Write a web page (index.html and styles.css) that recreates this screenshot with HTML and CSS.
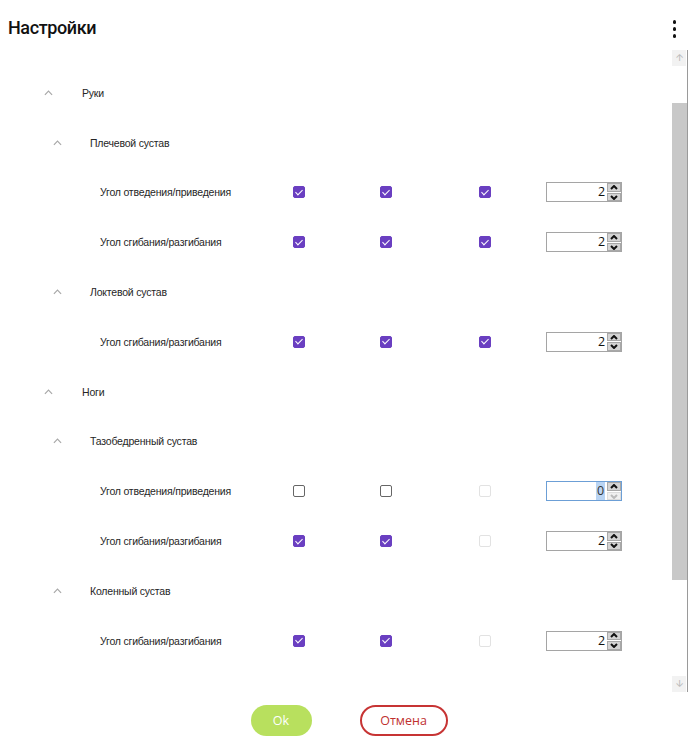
FILE: index.html
```html
<!DOCTYPE html>
<html lang="ru">
<head>
  <meta charset="UTF-8" />
  <meta name="viewport" content="width=device-width, initial-scale=1.0"/>
  <title>Настройки</title>
  <link rel="stylesheet" href="styles.css">
</head>
<body>
  <div class="dialog">
    <div class="header">
      <h1>Настройки</h1>
      <div class="kebab"><span></span><span></span><span></span></div>
    </div>

    <div class="body">
      <div class="tree">
        <div class="group lvl0">
          <svg class="chev" viewBox="0 0 10 6"><polyline points="1,5 5,1 9,5"/></svg>
          <span>Руки</span>
        </div>
        <div class="group lvl1">
          <svg class="chev" viewBox="0 0 10 6"><polyline points="1,5 5,1 9,5"/></svg>
          <span>Плечевой сустав</span>
        </div>
        <div class="leaf">
          <span class="name">Угол отведения/приведения</span>
          <span class="cb on"></span><span class="cb on"></span><span class="cb on"></span>
          <div class="spin"><span class="val">2</span><div class="arrows"><b><svg viewBox="0 0 8 5"><polyline points="1,4 4,1 7,4"/></svg></b><b><svg viewBox="0 0 8 5"><polyline points="1,1 4,4 7,1"/></svg></b></div></div>
        </div>
        <div class="leaf">
          <span class="name">Угол сгибания/разгибания</span>
          <span class="cb on"></span><span class="cb on"></span><span class="cb on"></span>
          <div class="spin"><span class="val">2</span><div class="arrows"><b><svg viewBox="0 0 8 5"><polyline points="1,4 4,1 7,4"/></svg></b><b><svg viewBox="0 0 8 5"><polyline points="1,1 4,4 7,1"/></svg></b></div></div>
        </div>
        <div class="group lvl1">
          <svg class="chev" viewBox="0 0 10 6"><polyline points="1,5 5,1 9,5"/></svg>
          <span>Локтевой сустав</span>
        </div>
        <div class="leaf">
          <span class="name">Угол сгибания/разгибания</span>
          <span class="cb on"></span><span class="cb on"></span><span class="cb on"></span>
          <div class="spin"><span class="val">2</span><div class="arrows"><b><svg viewBox="0 0 8 5"><polyline points="1,4 4,1 7,4"/></svg></b><b><svg viewBox="0 0 8 5"><polyline points="1,1 4,4 7,1"/></svg></b></div></div>
        </div>
        <div class="group lvl0">
          <svg class="chev" viewBox="0 0 10 6"><polyline points="1,5 5,1 9,5"/></svg>
          <span>Ноги</span>
        </div>
        <div class="group lvl1">
          <svg class="chev" viewBox="0 0 10 6"><polyline points="1,5 5,1 9,5"/></svg>
          <span>Тазобедренный сустав</span>
        </div>
        <div class="leaf">
          <span class="name">Угол отведения/приведения</span>
          <span class="cb"></span><span class="cb"></span><span class="cb off"></span>
          <div class="spin focus"><span class="val sel">0</span><div class="arrows"><b><svg viewBox="0 0 8 5"><polyline points="1,4 4,1 7,4"/></svg></b><b class="dis"><svg viewBox="0 0 8 5"><polyline points="1,1 4,4 7,1"/></svg></b></div></div>
        </div>
        <div class="leaf">
          <span class="name">Угол сгибания/разгибания</span>
          <span class="cb on"></span><span class="cb on"></span><span class="cb off"></span>
          <div class="spin"><span class="val">2</span><div class="arrows"><b><svg viewBox="0 0 8 5"><polyline points="1,4 4,1 7,4"/></svg></b><b><svg viewBox="0 0 8 5"><polyline points="1,1 4,4 7,1"/></svg></b></div></div>
        </div>
        <div class="group lvl1">
          <svg class="chev" viewBox="0 0 10 6"><polyline points="1,5 5,1 9,5"/></svg>
          <span>Коленный сустав</span>
        </div>
        <div class="leaf">
          <span class="name">Угол сгибания/разгибания</span>
          <span class="cb on"></span><span class="cb on"></span><span class="cb off"></span>
          <div class="spin"><span class="val">2</span><div class="arrows"><b><svg viewBox="0 0 8 5"><polyline points="1,4 4,1 7,4"/></svg></b><b><svg viewBox="0 0 8 5"><polyline points="1,1 4,4 7,1"/></svg></b></div></div>
        </div>
      </div>

      <div class="scrollbar">
        <div class="sb-btn">&#129129;</div>
        <div class="sb-track"><div class="sb-thumb"></div></div>
        <div class="sb-btn">&#129131;</div>
      </div>
    </div>

    <div class="footer">
      <button class="btn ok">Ok</button>
      <button class="btn cancel">Отмена</button>
    </div>
  </div>
</body>
</html>
```

FILE: styles.css
```css
* {
  box-sizing: border-box;
  margin: 0;
  padding: 0;
}

body {
  font-family: "Liberation Sans", Arial, sans-serif;
  background: #fff;
  color: #262626;
  width: 688px;
  height: 756px;
  overflow: hidden;
}

.dialog {
  display: flex;
  flex-direction: column;
  height: 756px;
}

.header {
  display: flex;
  align-items: center;
  justify-content: space-between;
  height: 50px;
  padding: 4px 12px 0 8px;
}

h1 {
  font-family: Roboto, sans-serif;
  font-size: 18px;
  font-weight: 500;
  color: #111;
  letter-spacing: -0.4px;
}

.kebab {
  display: flex;
  flex-direction: column;
  gap: 3.5px;
  padding-top: 4px;
}

.kebab span {
  width: 3.5px;
  height: 3.5px;
  border-radius: 50%;
  background: #111;
}

.body {
  display: flex;
  height: 642px;
}

.tree {
  flex: 1;
  padding-top: 18px;
}

.group, .leaf {
  height: 49.8px;
  display: flex;
  align-items: center;
  font-size: 10.5px;
  letter-spacing: -0.2px;
}

.chev {
  width: 9px;
  height: 6px;
  fill: none;
  stroke: #a8a8a8;
  stroke-width: 1.3;
}

.lvl0 { padding-left: 44px; }
.lvl0 .chev { margin-right: 29px; }
.lvl1 { padding-left: 53px; }
.lvl1 .chev { margin-right: 28px; }

.leaf {
  display: grid;
  grid-template-columns: 293px 87px 99px 67px 76px;
  align-items: center;
}

.leaf .name {
  padding-left: 100px;
}

.cb {
  width: 12px;
  height: 12px;
  border: 1.5px solid #666;
  border-radius: 2px;
  position: relative;
}

.cb.on {
  background: #6a3fc1;
  border-color: #6a3fc1;
}

.cb.on::after {
  content: "";
  position: absolute;
  left: 2.5px;
  top: 0.5px;
  width: 3px;
  height: 6px;
  border: solid #fff;
  border-width: 0 1.5px 1.5px 0;
  transform: rotate(45deg);
}

.cb.off {
  border-color: #e2e2e2;
}

.spin {
  display: flex;
  width: 76px;
  height: 20px;
  border: 1px solid #a5a5a5;
  background: #fff;
}

.spin.focus {
  border-color: #6c9fd6;
}

.val {
  flex: 1;
  text-align: right;
  font-family: "Open Sans", sans-serif;
  font-size: 12.5px;
  line-height: 18px;
  padding-right: 1px;
  color: #111;
}

.val.sel {
  flex: none;
  margin-left: auto;
  background: #b9d4f3;
  color: #333;
  padding: 0 1px;
  margin-right: 1px;
}

.arrows {
  width: 15px;
  display: flex;
  flex-direction: column;
  gap: 1px;
  padding: 0 0 0 1px;
}

.arrows b {
  flex: 1;
  display: flex;
  align-items: center;
  justify-content: center;
  background: #d4d4d4;
  border: 1px solid #a8a8a8;
}

.arrows svg {
  width: 8px;
  height: 5px;
  fill: none;
  stroke: #111;
  stroke-width: 2;
}

.arrows b.dis {
  background: #f0f0f0;
  border-color: #dcdcdc;
}

.arrows b.dis svg {
  stroke: #bbb;
}

.scrollbar {
  width: 16px;
  display: flex;
  flex-direction: column;
  border-right: 1px solid #9a9a9a;
}

.sb-btn {
  height: 16px;
  margin: 0 1px 0 0;
  background: #f2f2f2;
  color: #bdbdbd;
  font-size: 10px;
  line-height: 16px;
  text-align: center;
}

.sb-track {
  flex: 1;
  padding: 37px 0 96px 0;
}

.sb-thumb {
  height: 100%;
  background: #c8c8c8;
}

.footer {
  display: flex;
  justify-content: center;
  gap: 48px;
  padding-top: 13px;
  padding-left: 10px;
}

.btn {
  height: 31px;
  border-radius: 16px;
  font-family: "Open Sans", sans-serif;
  font-size: 12.5px;
  cursor: pointer;
}

.btn.ok {
  width: 61px;
  background: #b8e05e;
  border: none;
  color: #fff;
  font-weight: 500;
}

.btn.cancel {
  width: 88px;
  background: #fff;
  border: 2px solid #c73434;
  color: #c0302f;
}
```
